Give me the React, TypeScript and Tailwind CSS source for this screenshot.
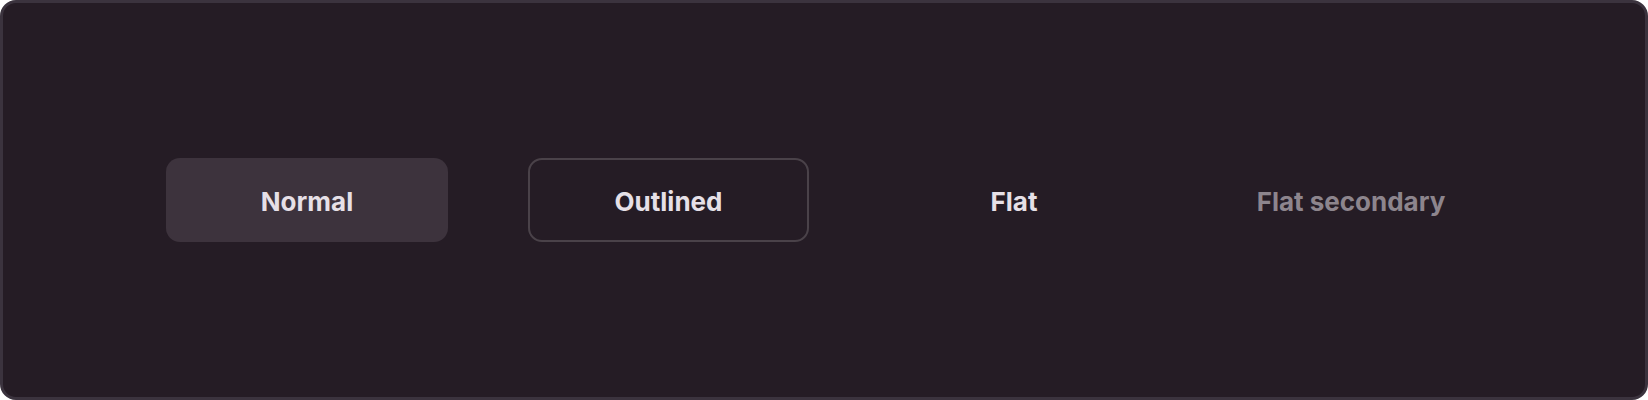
const App = () => {
  return (
    <div className="w-[1648px] h-[400px] bg-[#251c25] border-[3px] border-[#3b333e] rounded-[16px] flex flex-row items-center pl-[163px] font-['Inter',sans-serif] font-bold text-[26px]">
      <button className="w-[282px] h-[84px] pt-[3px] rounded-[14px] bg-[#3d333d] text-[#e6e0e7]">
        Normal
      </button>
      <button className="ml-[80px] w-[281px] h-[84px] pt-[3px] rounded-[14px] border-[2.5px] border-[#4a4249] text-[#e6e0e7]">
        Outlined
      </button>
      <button className="ml-[105px] w-[200px] h-[84px] pt-[3px] rounded-[14px] text-[#e6e0e7]">
        Flat
      </button>
      <button className="ml-[117px] w-[240px] h-[84px] pt-[3px] rounded-[14px] text-[#8d858d]">
        Flat secondary
      </button>
    </div>
  );
};

export default App;
